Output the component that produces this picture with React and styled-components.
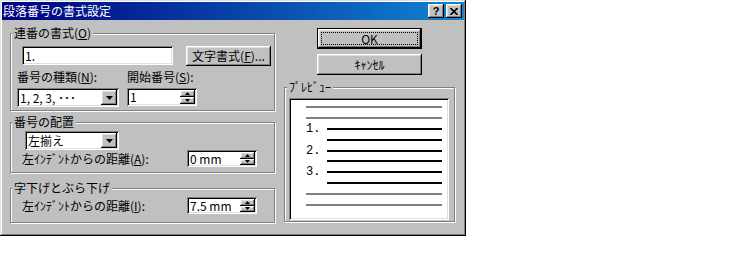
import React from "react";
import styled, { createGlobalStyle } from "styled-components";

const GlobalStyle = createGlobalStyle`
  html, body { margin: 0; padding: 0; background: #fff; }
  body {
    font-family: "Noto Sans CJK JP", "Noto Sans", sans-serif;
    font-size: 12px;
    color: #000;
  }
`;

const raised = `
  box-shadow: inset -1px -1px #000, inset 1px 1px #fff,
    inset -2px -2px #808080, inset 2px 2px #dfdfdf;
`;

const sunken = `
  box-shadow: inset 1px 1px #808080, inset -1px -1px #fff,
    inset 2px 2px #000, inset -2px -2px #dfdfdf;
`;

const Window = styled.div`
  width: 466px;
  height: 236px;
  box-sizing: border-box;
  padding: 2px;
  background: #c0c0c0;
  box-shadow: inset -1px -1px #000, inset 1px 1px #dfdfdf,
    inset -2px -2px #808080, inset 2px 2px #fff;
  display: flex;
  flex-direction: column;
`;

const TitleBar = styled.div`
  height: 18px;
  display: flex;
  align-items: center;
  padding-left: 1px;
  background: linear-gradient(to right, #000080, #1084d0);
  color: #fff;
  line-height: 14px;
`;

const TitleButtons = styled.div`
  margin-left: auto;
  margin-right: 2px;
  display: flex;
  gap: 2px;
`;

const TitleButton = styled.div`
  width: 16px;
  height: 14px;
  background: #c0c0c0;
  ${raised}
  display: flex;
  align-items: center;
  justify-content: center;
  color: #000;
  font: bold 11px "Liberation Sans", sans-serif;
`;

const Body = styled.div`
  display: flex;
`;

const LeftColumn = styled.div`
  width: 265px;
  margin: 13px 0 0 8px;
  display: flex;
  flex-direction: column;
`;

const RightColumn = styled.div`
  width: 171px;
  margin: 8px 0 0 9px;
  display: flex;
  flex-direction: column;
`;

const Group = styled.div`
  box-sizing: border-box;
  height: ${(p) => p.$h}px;
  margin-top: ${(p) => p.$mt || 0}px;
  border: 1px solid #808080;
  box-shadow: 1px 1px 0 #fff, inset 1px 1px 0 #fff;
  display: flex;
  flex-direction: column;
  align-items: flex-start;
`;

const Legend = styled.div`
  margin: -8px 0 0 ${(p) => p.$ml ?? 1}px;
  padding: 0 2px;
  height: 14px;
  line-height: 14px;
  background: #c0c0c0;
`;

const Row = styled.div`
  display: flex;
  align-items: ${(p) => p.$align || "flex-start"};
  margin: ${(p) => p.$mt || 0}px 0 0 ${(p) => p.$ml || 0}px;
`;

const Field = styled.div`
  display: flex;
  flex-direction: column;
  gap: 4px;
  width: ${(p) => (p.$w ? `${p.$w}px` : "auto")};
`;

const Label = styled.span`
  line-height: 14px;
  height: 14px;
  white-space: nowrap;
  width: ${(p) => (p.$w ? `${p.$w}px` : "auto")};
`;

const TextBox = styled.div`
  box-sizing: border-box;
  width: ${(p) => p.$w}px;
  height: ${(p) => p.$h || 19}px;
  background: #fff;
  ${sunken}
  display: flex;
  align-items: center;
  padding-left: 3px;
  line-height: 14px;
  white-space: nowrap;
`;

const Combo = styled(TextBox)`
  padding-right: 2px;
`;

const ComboText = styled.span`
  flex: 1;
`;

const DropButton = styled.div`
  width: 16px;
  align-self: stretch;
  margin: 2px 0;
  background: #c0c0c0;
  ${raised}
  display: flex;
  align-items: center;
  justify-content: center;
`;

const SpinButtons = styled.div`
  width: 15px;
  align-self: stretch;
  margin: 2px 2px 2px auto;
  display: flex;
  flex-direction: column;
`;

const SpinHalf = styled.div`
  flex: 1;
  background: #c0c0c0;
  ${raised}
  display: flex;
  align-items: center;
  justify-content: center;
`;

const Button = styled.div`
  box-sizing: border-box;
  width: ${(p) => p.$w}px;
  height: ${(p) => p.$h || 20}px;
  margin: ${(p) => p.$mt || 0}px 0 0 ${(p) => p.$ml || 0}px;
  background: #c0c0c0;
  ${raised}
  ${(p) => p.$default && "border: 1px solid #000;"}
  display: flex;
  align-items: center;
  justify-content: center;
  line-height: 14px;
  white-space: nowrap;
`;

const FocusRing = styled.span`
  flex: 1;
  align-self: stretch;
  margin: 3px;
  border: 1px dotted #000;
  display: flex;
  align-items: center;
  justify-content: center;
`;

const Preview = styled.div`
  box-sizing: border-box;
  width: 160px;
  height: 122px;
  margin: 4px 0 0 4px;
  padding: 4px 7px 0 17px;
  background: #fff;
  ${sunken}
  display: flex;
  flex-direction: column;
`;

const PreviewRow = styled.div`
  height: 10.8px;
  display: flex;
  align-items: center;
`;

const Num = styled.span`
  width: 21px;
  font: 12px/10px "Liberation Mono", monospace;
  margin-left: ${(p) => (p.$blank ? 0 : 0)}px;
`;

const Line = styled.div`
  flex: 1;
  height: 2px;
  background: ${(p) => (p.$dark ? "#000" : "#808080")};
`;

const Arrow = ({ up, w = 7, h = 4 }) => (
  <svg width={w} height={h} viewBox={`0 0 ${w} ${h}`}>
    <polygon
      points={up ? `0,${h} ${w},${h} ${w / 2},0` : `0,0 ${w},0 ${w / 2},${h}`}
      fill="#000"
    />
  </svg>
);

const Spinner = ({ w, h, children }) => (
  <TextBox $w={w} $h={h}>
    <span>{children}</span>
    <SpinButtons>
      <SpinHalf>
        <Arrow up w={5} h={3} />
      </SpinHalf>
      <SpinHalf>
        <Arrow w={5} h={3} />
      </SpinHalf>
    </SpinButtons>
  </TextBox>
);

const Select = ({ w, children }) => (
  <Combo $w={w}>
    <ComboText>{children}</ComboText>
    <DropButton>
      <Arrow />
    </DropButton>
  </Combo>
);

const previewRows = [
  { kind: "gray" },
  { kind: "gray" },
  { kind: "num", n: "1." },
  { kind: "dark" },
  { kind: "num", n: "2." },
  { kind: "dark" },
  { kind: "num", n: "3." },
  { kind: "dark" },
  { kind: "gray" },
  { kind: "gray" },
];

export default function App() {
  return (
    <>
      <GlobalStyle />
      <Window>
        <TitleBar>
          <span>段落番号の書式設定</span>
          <TitleButtons>
            <TitleButton>?</TitleButton>
            <TitleButton>
              <svg width="8" height="7" viewBox="0 0 8 7">
                <path d="M0.5 0 L7.5 7 M7.5 0 L0.5 7" stroke="#000" strokeWidth="1.6" />
              </svg>
            </TitleButton>
          </TitleButtons>
        </TitleBar>

        <Body>
          <LeftColumn>
            <Group $h={78}>
              <Legend>
                連番の書式(<u>O</u>)
              </Legend>
              <Row $mt={6} $ml={11}>
                <TextBox $w={151}>1.</TextBox>
                <Button $w={85} $ml={13}>
                  文字書式(<u>F</u>)...
                </Button>
              </Row>
              <Row $mt={4} $ml={6}>
                <Field $w={110}>
                  <Label>
                    番号の種類(<u>N</u>):
                  </Label>
                  <Select w={102}>1, 2, 3, ･･･</Select>
                </Field>
                <Field>
                  <Label>
                    開始番号(<u>S</u>):
                  </Label>
                  <Spinner w={70} h={18}>
                    1
                  </Spinner>
                </Field>
              </Row>
            </Group>

            <Group $h={51} $mt={11}>
              <Legend>番号の配置</Legend>
              <Row $mt={2} $ml={14}>
                <Select w={94}>左揃え</Select>
              </Row>
              <Row $align="center" $ml={11}>
                <Label $w={165}>
                  左ｲﾝﾃﾞﾝﾄからの距離(<u>A</u>):
                </Label>
                <Spinner w={70} h={17}>
                  0 mm
                </Spinner>
              </Row>
            </Group>

            <Group $h={35} $mt={15}>
              <Legend>字下げとぶら下げ</Legend>
              <Row $align="center" $mt={2} $ml={11}>
                <Label $w={165}>
                  左ｲﾝﾃﾞﾝﾄからの距離(<u>I</u>):
                </Label>
                <Spinner w={70} h={17}>
                  7.5 mm
                </Spinner>
              </Row>
            </Group>
          </LeftColumn>

          <RightColumn>
            <Button $w={105} $h={21} $ml={33} $default>
              <FocusRing>OK</FocusRing>
            </Button>
            <Button $w={105} $h={21} $ml={33} $mt={5}>
              ｷｬﾝｾﾙ
            </Button>
            <Group $h={135} $mt={12}>
              <Legend $ml={2}>ﾌﾟﾚﾋﾞｭｰ</Legend>
              <Preview>
                {previewRows.map((r, i) => (
                  <PreviewRow key={i}>
                    {r.kind !== "gray" && <Num>{r.n || ""}</Num>}
                    <Line $dark={r.kind !== "gray"} />
                  </PreviewRow>
                ))}
              </Preview>
            </Group>
          </RightColumn>
        </Body>
      </Window>
    </>
  );
}
